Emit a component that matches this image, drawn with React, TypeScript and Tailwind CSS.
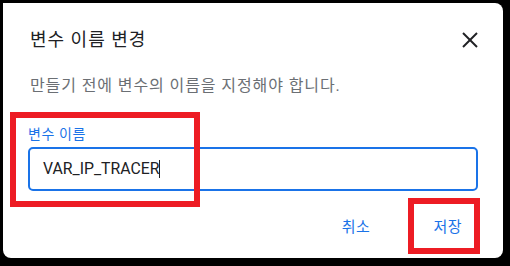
import React from "react"

const FONT = { fontFamily: "Roboto, 'Noto Sans CJK KR', sans-serif" }

function CloseIcon() {
  return (
    <svg viewBox="0 0 24 24" className="w-6 h-6" fill="none" stroke="#202124" strokeWidth="2">
      <line x1="5" y1="5" x2="19" y2="19" />
      <line x1="19" y1="5" x2="5" y2="19" />
    </svg>
  )
}

export default function App() {
  return (
    <div className="relative w-[510px] h-[266px] bg-black pt-[3px] pl-[3px] overflow-hidden" style={FONT}>
      {/* Dialog */}
      <div className="w-[500px] h-[255px] bg-white rounded-tr-[8px] rounded-b-[8px] px-[25px] pt-[25px]">
        <div className="flex items-center justify-between h-[24px]">
          <h2 className="text-[18px] leading-[24px] tracking-[1px] text-[#202124] pl-[2px]">변수 이름 변경</h2>
          <button className="-mr-[4px]">
            <CloseIcon />
          </button>
        </div>

        <p className="mt-[24px] text-[16px] leading-[20px] tracking-[0.9px] text-[#6b6f74] pl-[2px]">
          만들기 전에 변수의 이름을 지정해야 합니다.
        </p>

        <label className="block mt-[29px] text-[14px] leading-[18px] tracking-[0.6px] text-[#1a73e8]">
          변수 이름
        </label>
        <div className="mt-[4px] h-[44px] border-2 border-[#1a73e8] rounded-[5px] flex items-center pl-[13px]">
          <span className="text-[15.8px] text-[#202124]">VAR_IP_TRACER</span>
          <span className="w-px h-[18px] bg-[#202124]" />
        </div>

        <div className="mt-[18px] flex justify-end gap-[31px]">
          <button className="h-[36px] px-[16px] text-[15px] tracking-[0.5px] text-[#1a73e8]">취소</button>
          <button className="h-[36px] px-[16px] text-[15px] tracking-[0.5px] text-[#1a73e8]">저장</button>
        </div>
      </div>

      {/* Red annotation boxes */}
      <div className="absolute left-[10px] top-[112px] w-[190px] h-[95px] border-[6px] border-[#ed1c24]" />
      <div className="absolute left-[408px] top-[198px] w-[72px] h-[56px] border-[6px] border-[#ed1c24]" />
    </div>
  )
}
